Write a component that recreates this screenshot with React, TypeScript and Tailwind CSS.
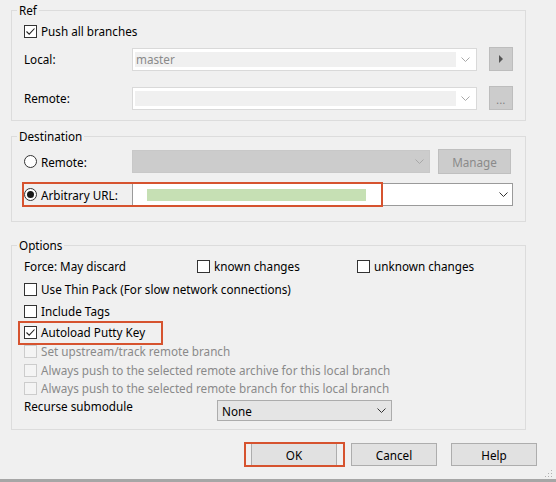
import React from "react";

const Chevron = ({ color = "#a0a0a0" }: { color?: string }) => (
  <svg width="9" height="5" viewBox="0 0 9 5" className="block">
    <polyline points="0.5,0.5 4.5,4.5 8.5,0.5" fill="none" stroke={color} strokeWidth="1" />
  </svg>
);

const CheckBox = ({ checked = false, disabled = false }: { checked?: boolean; disabled?: boolean }) => (
  <span
    className={
      disabled
        ? "w-[13px] h-[13px] border border-[#cccccc] bg-[#f4f4f4] shrink-0 flex items-center justify-center"
        : "w-[13px] h-[13px] border border-[#333333] bg-white shrink-0 flex items-center justify-center"
    }
  >
    {checked && (
      <svg width="11" height="11" viewBox="0 0 11 11" className="block">
        <polyline points="1.5,5.5 4.2,8.2 9.5,2.5" fill="none" stroke="#222" strokeWidth="1.1" />
      </svg>
    )}
  </span>
);

const Radio = ({ selected = false }: { selected?: boolean }) => (
  <span className="w-[13px] h-[13px] rounded-full border border-[#333333] bg-white shrink-0 flex items-center justify-center">
    {selected && <span className="w-[7px] h-[7px] rounded-full bg-[#1a1a1a]" />}
  </span>
);

const Check = ({
  label,
  checked,
  disabled,
}: {
  label: string;
  checked?: boolean;
  disabled?: boolean;
}) => (
  <div className="flex items-center h-[16px] gap-[4px]">
    <CheckBox checked={checked} disabled={disabled} />
    <span className={disabled ? "text-[#8a8a8a] whitespace-nowrap" : "whitespace-nowrap"}>{label}</span>
  </div>
);

const DisabledWhiteCombo = ({ text }: { text?: string }) => (
  <div className="w-[345px] h-[23px] border border-[#d9d9d9] bg-white flex px-[2px] py-[3px]">
    <div className="flex-1 bg-[#f0f0f0] text-[#8a8a8a] pl-[1px] leading-[15px]">{text}</div>
    <div className="w-[18px] flex items-center justify-center">
      <Chevron color="#a8a8a8" />
    </div>
  </div>
);

const GrayButton = ({ children }: { children: React.ReactNode }) => (
  <div className="w-[24px] h-[24px] ml-[12px] bg-[#cccccc] border border-[#bdbdbd] flex items-center justify-center">
    {children}
  </div>
);

export default function App() {
  return (
    <div className="w-[556px] h-[482px] bg-[#f0f0f0] relative overflow-hidden flex flex-col font-['Noto_Sans',sans-serif] text-[11.7px] leading-[16px] text-black">
      <div className="pl-[11px] pt-[2px] w-[526px]">
        {/* Ref */}
        <fieldset className="border border-[#dcdcdc] pl-[12px] pr-[11px] pt-[5px] pb-[10px] min-w-0">
          <legend className="ml-[-7px] px-[2px] leading-[16px]">Ref</legend>
          <Check label="Push all branches" checked />
          <div className="flex items-center h-[24px] mt-[8px]">
            <span className="w-[108px]">Local:</span>
            <DisabledWhiteCombo text="master" />
            <GrayButton>
              <svg width="6" height="8" viewBox="0 0 6 8" className="block">
                <polygon points="1,0 5,4 1,8" fill="#555" />
              </svg>
            </GrayButton>
          </div>
          <div className="flex items-center h-[24px] mt-[15px]">
            <span className="w-[108px]">Remote:</span>
            <DisabledWhiteCombo />
            <GrayButton>
              <span className="text-[#7a7a7a] text-[10px] leading-[10px] mt-[4px] tracking-[0.5px]">...</span>
            </GrayButton>
          </div>
        </fieldset>

        {/* Destination */}
        <fieldset className="border border-[#dcdcdc] pl-[12px] pr-[11px] pt-[5px] pb-[15px] mt-[7px] min-w-0">
          <legend className="ml-[-7px] px-[2px] leading-[16px]">Destination</legend>
          <div className="flex items-center h-[25px]">
            <div className="w-[108px] flex items-center gap-[4px]">
              <Radio />
              <span>Remote:</span>
            </div>
            <div className="w-[298px] h-[23px] bg-[#cccccc] border border-[#c8c8c8] flex items-center justify-end pr-[5px]">
              <Chevron color="#a8a8a8" />
            </div>
            <div className="w-[73px] h-[25px] ml-[8px] bg-[#cccccc] border border-[#bfbfbf] text-[#8a8a8a] flex items-center justify-center">
              Manage
            </div>
          </div>
          <div className="flex items-center h-[23px] mt-[9px] relative">
            <div className="w-[108px] flex items-center gap-[4px]">
              <Radio selected />
              <span>Arbitrary URL:</span>
            </div>
            <div className="w-[381px] h-[23px] bg-white border border-[#9a9a9a] flex items-center pl-[14px] pr-[4px]">
              <div className="w-[219px] h-[12px] bg-[#c6e0b4]" />
              <div className="flex-1" />
              <Chevron color="#333" />
            </div>
            <div className="absolute left-[-2px] top-[-1px] w-[361px] h-[25px] border-2 border-[#d6532f] pointer-events-none" />
          </div>
        </fieldset>

        {/* Options */}
        <fieldset className="border border-[#dcdcdc] pl-[12px] pr-[11px] pt-[5px] pb-[8px] mt-[15px] min-w-0">
          <legend className="ml-[-7px] px-[2px] leading-[16px]">Options</legend>
          <div className="flex items-center h-[16px]">
            <span className="w-[173px] whitespace-nowrap">Force: May discard</span>
            <div className="w-[160px]">
              <Check label="known changes" />
            </div>
            <Check label="unknown changes" />
          </div>
          <div className="mt-[7px]">
            <Check label="Use Thin Pack (For slow network connections)" />
          </div>
          <div className="mt-[6px]">
            <Check label="Include Tags" />
          </div>
          <div className="mt-[5px] relative">
            <Check label="Autoload Putty Key" checked />
            <div className="absolute left-[-6px] top-[-3px] w-[145px] h-[24px] border-2 border-[#d6532f] pointer-events-none" />
          </div>
          <div className="mt-[3px]">
            <Check label="Set upstream/track remote branch" disabled />
          </div>
          <div className="mt-[3px]">
            <Check label="Always push to the selected remote archive for this local branch" disabled />
          </div>
          <div className="mt-[2px]">
            <Check label="Always push to the selected remote branch for this local branch" disabled />
          </div>
          <div className="mt-[2px] flex items-start">
            <span className="w-[193px] whitespace-nowrap">Recurse submodule</span>
            <div className="mt-[2px] w-[175px] h-[21px] bg-[#e5e5e5] border border-[#acacac] flex items-center pl-[4px] pr-[5px]">
              <span className="flex-1">None</span>
              <Chevron color="#333" />
            </div>
          </div>
        </fieldset>
      </div>

      {/* Buttons */}
      <div className="flex justify-end gap-[14px] pr-[19px] mt-[13px]">
        <div className="relative">
          <div className="w-[86px] h-[23px] bg-[#e1e1e1] border border-[#adadad] flex items-center justify-center">OK</div>
          <div className="absolute left-[-7px] top-[-1px] w-[101px] h-[25px] border-2 border-[#d6532f] pointer-events-none" />
        </div>
        <div className="w-[86px] h-[23px] bg-[#e1e1e1] border border-[#adadad] flex items-center justify-center">Cancel</div>
        <div className="w-[86px] h-[23px] bg-[#e1e1e1] border border-[#adadad] flex items-center justify-center">Help</div>
      </div>

      <div className="mt-auto h-[3px] bg-[#a6a6a6]" />

      <svg width="8" height="8" viewBox="0 0 8 8" className="absolute right-[3px] bottom-[4px]">
        <rect x="6" y="0" width="1" height="1" fill="#b0b0b0" />
        <rect x="3" y="3" width="1" height="1" fill="#b0b0b0" />
        <rect x="6" y="3" width="1" height="1" fill="#b0b0b0" />
        <rect x="0" y="6" width="1" height="1" fill="#b0b0b0" />
        <rect x="3" y="6" width="1" height="1" fill="#b0b0b0" />
        <rect x="6" y="6" width="1" height="1" fill="#b0b0b0" />
      </svg>
    </div>
  );
}
